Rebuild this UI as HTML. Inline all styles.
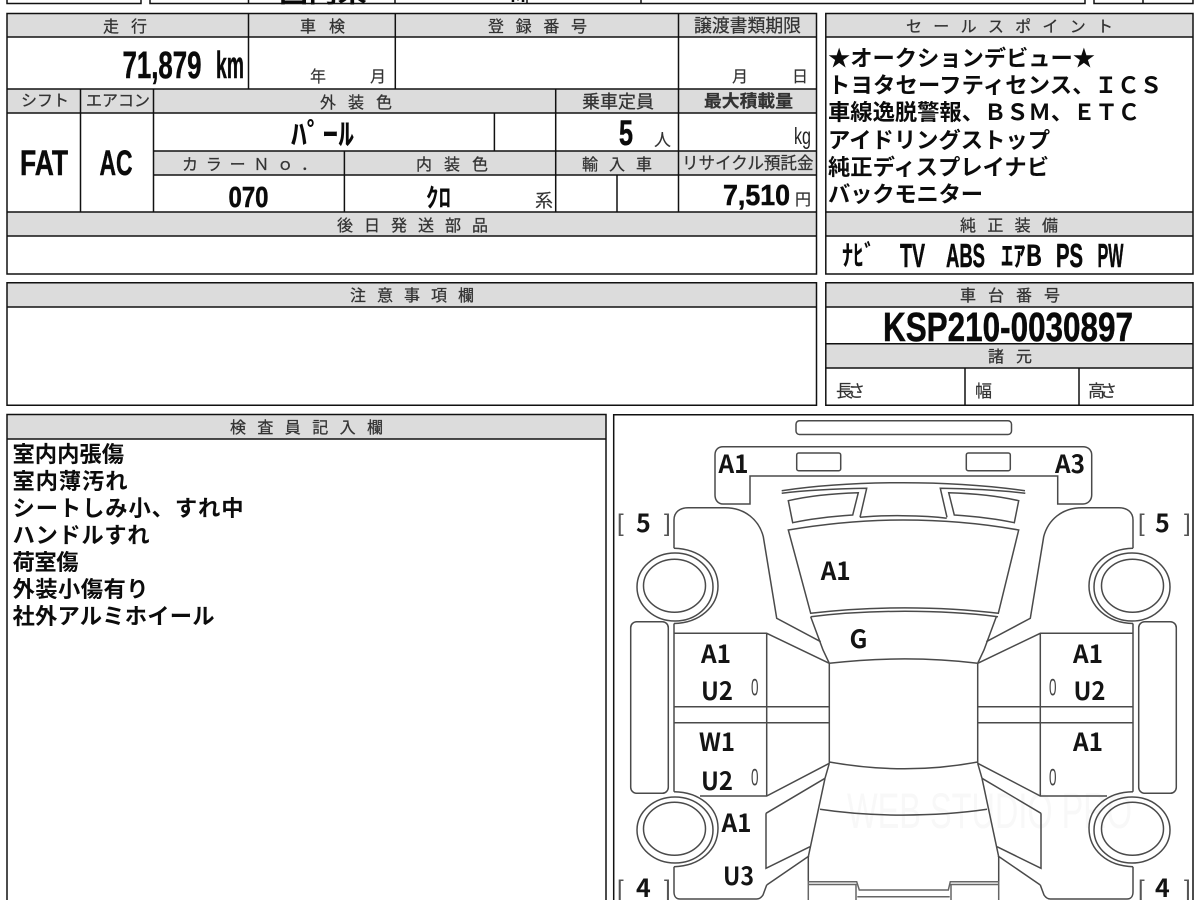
<!DOCTYPE html>
<html lang="ja">
<head>
<meta charset="utf-8">
<title>車両検査票</title>
<style>
html,body{margin:0;padding:0;background:#fff;width:1200px;height:900px;overflow:hidden}
svg{display:block;position:absolute;left:0;top:0}
text{font-family:"Liberation Sans","Noto Sans CJK JP",sans-serif}
.h{font-family:"Noto Sans CJK JP",sans-serif;font-size:16px;fill:#333;stroke:#333;stroke-width:.25}
.s{font-family:"Noto Sans CJK JP",sans-serif;font-size:16px;fill:#333;stroke:#333;stroke-width:.15}
.c{font-family:"Noto Sans CJK JP",sans-serif;font-weight:700;font-size:22.3px;fill:#0c0c0c}
.b{font-weight:700;fill:#0a0a0a;stroke:#0a0a0a;stroke-width:.5}
.k{font-family:"Noto Sans CJK JP",sans-serif;font-weight:700;fill:#0a0a0a}
.d{font-family:"Noto Sans CJK JP",sans-serif;font-weight:700;font-size:25px;fill:#141414}
.z{font-family:"Liberation Sans",sans-serif;font-size:24px;fill:#444}
.br{font-family:"Liberation Sans",sans-serif;font-size:24px;fill:#555}
.t{stroke:#111;stroke-width:1.5;fill:none}
.g{fill:#dcdcdc}
.l{stroke:#4a4a4a;stroke-width:1.5;fill:none}
</style>
</head>
<body>
<svg width="1200" height="900" viewBox="0 0 1200 900" xmlns="http://www.w3.org/2000/svg">
<rect width="1200" height="900" fill="#fff"/>

<!-- top strip -->
<path class="t" d="M7 0V3.500H141V0M150 0V3.500H1085V0M248.500 0V3.500M395 0V3.500M527 0V3.500M641 0V3.500M1094 0V3.500H1193V0M1143 0V3.500"/>
<text class="k" x="279" y="2" font-size="24" textLength="88" lengthAdjust="spacingAndGlyphs">国内未</text>
<text class="k" x="510" y="2" font-size="22" textLength="16" lengthAdjust="spacingAndGlyphs">M</text>

<!-- grey bands -->
<rect class="g" x="7" y="14" width="810" height="23"/>
<rect class="g" x="7" y="89" width="810" height="24"/>
<rect class="g" x="154" y="151" width="663" height="24"/>
<rect class="g" x="7" y="212" width="810" height="24"/>
<rect class="g" x="826" y="14" width="367" height="23"/>
<rect class="g" x="826" y="212" width="367" height="24"/>
<rect class="g" x="7" y="283" width="810" height="24"/>
<rect class="g" x="826" y="283" width="367" height="24"/>
<rect class="g" x="826" y="344" width="367" height="24"/>
<rect class="g" x="7" y="415" width="599" height="24"/>

<!-- table lines -->
<path class="t" d="M7 13.500H816.500V274H7ZM7 37H816.500M7 89H816.500M7 113H816.500M154 151H816.500M154 175H816.500M7 212H816.500M7 236H816.500"/>
<path class="t" d="M80.500 89V212M153.500 89V212M248.500 14V89M395.300 14V89M678.500 14V212M555.700 89V212M494.400 113V151M344.400 151V212M617 175V212"/>
<path class="t" d="M825.800 13.500H1193V274H825.800ZM825.800 37H1193M825.800 212H1193M825.800 236H1193"/>
<path class="t" d="M7 282.700H816.500V405.300H7ZM7 307H816.500"/>
<path class="t" d="M825.800 282.700H1193V405.300H825.800ZM825.800 307H1193M825.800 343.700H1193M825.800 368H1193M965 368V405.300M1079 368V405.300"/>
<path class="t" d="M7 900V414.500H606V900M7 439H606"/>
<path class="t" d="M613.700 900V414.700H1193V900"/>

<!-- header labels -->
<text class="h" x="103" y="32" textLength="44">走行</text>
<text class="h" x="300" y="32" textLength="45">車検</text>
<text class="h" x="488" y="32" textLength="99">登録番号</text>
<text class="h" x="694" y="32" style="font-size:18px" textLength="107" lengthAdjust="spacingAndGlyphs">譲渡書類期限</text>
<text class="h" x="906" y="32" textLength="207">セールスポイント</text>
<text class="h" x="21" y="106" textLength="48">シフト</text>
<text class="h" x="86" y="106" textLength="64" lengthAdjust="spacingAndGlyphs">エアコン</text>
<text class="h" x="320" y="108" textLength="72">外装色</text>
<text class="h" x="582" y="108" style="font-size:18px" textLength="72" lengthAdjust="spacingAndGlyphs">乗車定員</text>
<text class="h" x="704" y="107" style="font-size:17px;font-weight:700" textLength="89" lengthAdjust="spacingAndGlyphs">最大積載量</text>
<text class="h" x="182" y="170" textLength="135">カラーＮｏ．</text>
<text class="h" x="416" y="170" textLength="72">内装色</text>
<text class="h" x="582" y="170" textLength="70">輸入車</text>
<text class="h" x="682" y="169" style="font-size:17px" textLength="131.500" lengthAdjust="spacingAndGlyphs">リサイクル預託金</text>
<text class="h" x="337" y="231" textLength="151">後日発送部品</text>
<text class="h" x="960" y="231" textLength="98">純正装備</text>
<text class="h" x="350" y="301" textLength="124">注意事項欄</text>
<text class="h" x="960" y="301" textLength="100">車台番号</text>
<text class="h" x="988" y="362" textLength="44">諸元</text>
<text class="h" x="230" y="433" textLength="153">検査員記入欄</text>

<!-- values -->
<text class="b" x="122.500" y="78" font-size="38" textLength="79" lengthAdjust="spacingAndGlyphs">71,879</text>
<text class="b" x="216" y="78" font-size="38" textLength="28" lengthAdjust="spacingAndGlyphs">km</text>
<text class="s" x="310" y="82">年</text>
<text class="s" x="370" y="82">月</text>
<text class="s" x="732" y="82">月</text>
<text class="s" x="792" y="82">日</text>
<text class="k" x="291" y="145" font-size="30" textLength="63" lengthAdjust="spacingAndGlyphs">ﾊﾟｰﾙ</text>
<text class="b" x="20" y="175" font-size="35" textLength="48" lengthAdjust="spacingAndGlyphs">FAT</text>
<text class="b" x="99.500" y="175" font-size="35" textLength="33" lengthAdjust="spacingAndGlyphs">AC</text>
<text class="b" x="228.500" y="207" font-size="29" textLength="40" lengthAdjust="spacingAndGlyphs">070</text>
<text class="k" x="426" y="207" font-size="26" textLength="25" lengthAdjust="spacingAndGlyphs">ｸﾛ</text>
<text class="s" x="535" y="207" style="font-size:18px">系</text>
<text class="b" x="619" y="145" font-size="35" textLength="14" lengthAdjust="spacingAndGlyphs">5</text>
<text class="s" x="654" y="146" style="font-size:17px">人</text>
<text x="794" y="144" font-size="23" fill="#222" textLength="17" lengthAdjust="spacingAndGlyphs">kg</text>
<text class="b" x="723" y="205" font-size="29" textLength="67" lengthAdjust="spacingAndGlyphs">7,510</text>
<text class="s" x="795" y="205" style="font-size:16px">円</text>

<!-- sales points -->
<text class="c" x="828" y="66" textLength="267">★オークションデビュー★</text>
<text class="c" x="828" y="93" textLength="334">トヨタセーフティセンス、ＩＣＳ</text>
<text class="c" x="828" y="120" textLength="312">車線逸脱警報、ＢＳＭ、ＥＴＣ</text>
<text class="c" x="828" y="148" textLength="222">アイドリングストップ</text>
<text class="c" x="828" y="175" textLength="221">純正ディスプレイナビ</text>
<text class="c" x="828" y="202" textLength="155">バックモニター</text>

<!-- equipment -->
<text class="k" x="842" y="265" font-size="28" textLength="33" lengthAdjust="spacingAndGlyphs">ﾅﾋﾞ</text>
<text class="b" x="900" y="267" font-size="33" textLength="25" lengthAdjust="spacingAndGlyphs">TV</text>
<text class="b" x="946" y="267" font-size="33" textLength="39" lengthAdjust="spacingAndGlyphs">ABS</text>
<text class="k" x="1001" y="266" font-size="29" textLength="41" lengthAdjust="spacingAndGlyphs">ｴｱB</text>
<text class="b" x="1056" y="267" font-size="33" textLength="27" lengthAdjust="spacingAndGlyphs">PS</text>
<text class="b" x="1097.500" y="267" font-size="33" textLength="26" lengthAdjust="spacingAndGlyphs">PW</text>

<!-- chassis -->
<text class="b" x="883" y="341" font-size="41" textLength="250" lengthAdjust="spacingAndGlyphs">KSP210-0030897</text>
<text class="s" x="836" y="397" style="font-size:17px" textLength="29">長さ</text>
<text class="s" x="975" y="397" style="font-size:17px">幅</text>
<text class="s" x="1088" y="397" style="font-size:17px" textLength="29">高さ</text>

<!-- notes -->
<text class="c" x="12.500" y="462" textLength="111.500">室内内張傷</text>
<text class="c" x="12.500" y="489" textLength="115">室内薄汚れ</text>
<text class="c" x="12.500" y="516" textLength="231">シートしみ小、すれ中</text>
<text class="c" x="12.500" y="543" textLength="137">ハンドルすれ</text>
<text class="c" x="12.500" y="570" textLength="66">荷室傷</text>
<text class="c" x="12.500" y="597" textLength="136">外装小傷有り</text>
<text class="c" x="12.500" y="624" textLength="202">社外アルミホイール</text>

<!-- watermark -->
<text x="847" y="828" font-size="50" fill="#f8f8f8" textLength="285" lengthAdjust="spacingAndGlyphs">WEB STUDIO PRO</text>

<!-- car diagram: left half mirrored -->
<defs>
<g id="half">
<path class="l" d="M674 548.300V520C674 512 680 507.700 688.300 507.700H725C745 507.700 759 520 763.300 536.700L776.700 618.300L820.700 641.700"/>
<ellipse class="l" cx="675" cy="587" rx="38" ry="34"/>
<ellipse class="l" cx="674.500" cy="585.700" rx="31" ry="26.500"/>
<path class="l" d="M674 548.300C700 549 718 565 718 586C718 606 700 623 674 623.500"/>
<rect class="l" x="630.700" y="621.700" width="37.600" height="171.600" rx="6"/>
<path class="l" d="M674 623.500V791.700M674 633.300H766.700L829.300 663.300M766.700 633.300V796M674 706.700H829.300M674 722.700H829.300M700 796H766.700L829.300 763.300"/>
<path class="l" d="M766 813.300L825 778.300M766 813.300V868.300L810 846.700M766.700 885L809 856"/>
<path class="l" d="M766.700 885L763 895C761 898 759 899 756.700 899H680C676 899 674 896 674 892V866.700"/>
<ellipse class="l" cx="675" cy="830" rx="38" ry="33"/>
<ellipse class="l" cx="674.500" cy="828.700" rx="31" ry="26.500"/>
<path class="l" d="M674 791.700C700 792 718 808 718 828C718 850 700 866 674 866.700"/>
<path class="l" d="M788.300 500.700C808 496 832 493.500 858.300 492.700L852.700 515C830 516.500 810 519 792.700 522.700Z"/>
<path class="l" d="M781.700 493.300C808 490 838 488.800 866.700 488.300L860 517.300"/>
<rect class="l" x="796.700" y="453" width="44" height="17.700" rx="2"/>
<path class="l" d="M829.300 663.300V763.300" stroke-width="2"/>
<path class="l" d="M825 778.300L808.300 856.700V881.500"/>
<path class="l" d="M829.300 763.300L825 778.300"/>
<path class="l" d="M810.700 616.700L823 650L829.300 663.300"/>
</g>
</defs>
<use href="#half"/>
<use href="#half" transform="translate(1807,0) scale(-1,1)"/>

<!-- central parts -->
<rect class="l" x="796" y="420.700" width="215.500" height="13.800" rx="3.500"/>
<path class="l" d="M723 446.700H1083C1088 446.700 1091.700 450 1091.700 455V495C1091.700 500 1088 504 1083 504H1057.700V476H750V504H723C718 504 715 500 715 495V455C715 450 718 446.700 723 446.700Z"/>
<path class="l" d="M781.700 490.700C820 485 860 482.700 903 482.700C945 482.700 985 485 1025 490.700"/>
<path class="l" d="M860 517.300C880 515 925 515 946.700 518.300"/>
<path class="l" d="M788.300 530C830 523 870 520 903 520C940 520 980 523 1018.700 530L998.300 613.300C940 606 870 606 810.700 613.300Z"/>
<path class="l" d="M810.700 616.700C870 609.500 940 609.500 998 616.700"/>
<path class="l" d="M829.300 663.300C880 657.500 930 657.500 977.700 663.300"/>
<path class="l" d="M829.300 762C880 771 930 771 977.700 762"/>
<path class="l" d="M820 809.300C870 817 935 817 987 809.300"/>
<path stroke="#666" stroke-width="1.500" fill="none" d="M808.300 900V881.700H856.700L859.300 890H948.300L950.300 881.700H998.700V900M808.300 884.500H856V900M857.300 896.700H949.700M951 900V884.500H998.700"/>

<!-- diagram labels -->
<text class="d" x="718.500" y="473" textLength="30" lengthAdjust="spacingAndGlyphs">A1</text>
<text class="d" x="1055" y="473" textLength="30" lengthAdjust="spacingAndGlyphs">A3</text>
<text class="d" x="820.700" y="580" textLength="30" lengthAdjust="spacingAndGlyphs">A1</text>
<text class="d" x="849.500" y="648">G</text>
<text class="d" x="701" y="663" textLength="30" lengthAdjust="spacingAndGlyphs">A1</text>
<text class="d" x="701" y="700" textLength="32" lengthAdjust="spacingAndGlyphs">U2</text>
<text class="d" x="699" y="751" textLength="36" lengthAdjust="spacingAndGlyphs">W1</text>
<text class="d" x="701" y="790" textLength="32" lengthAdjust="spacingAndGlyphs">U2</text>
<text class="d" x="721.500" y="832" textLength="30" lengthAdjust="spacingAndGlyphs">A1</text>
<text class="d" x="723" y="885" textLength="31" lengthAdjust="spacingAndGlyphs">U3</text>
<text class="d" x="1073" y="663" textLength="30" lengthAdjust="spacingAndGlyphs">A1</text>
<text class="d" x="1073.500" y="700" textLength="32" lengthAdjust="spacingAndGlyphs">U2</text>
<text class="d" x="1073" y="751" textLength="30" lengthAdjust="spacingAndGlyphs">A1</text>
<text class="z" x="751" y="695.500" textLength="7.500" lengthAdjust="spacingAndGlyphs">0</text>
<text class="z" x="751" y="785.500" textLength="7.500" lengthAdjust="spacingAndGlyphs">0</text>
<text class="z" x="1049" y="695.500" textLength="7.500" lengthAdjust="spacingAndGlyphs">0</text>
<text class="z" x="1049" y="785.500" textLength="7.500" lengthAdjust="spacingAndGlyphs">0</text>
<text class="br" x="617" y="531">[</text><text class="d" x="636" y="532">5</text><text class="br" x="664" y="531">]</text>
<text class="br" x="1138" y="531">[</text><text class="d" x="1155" y="532">5</text><text class="br" x="1184" y="531">]</text>
<text class="br" x="617" y="897">[</text><text class="d" x="636" y="897">4</text><text class="br" x="664" y="897">]</text>
<text class="br" x="1138" y="897">[</text><text class="d" x="1155" y="897">4</text><text class="br" x="1184" y="897">]</text>
</svg>
</body>
</html>
